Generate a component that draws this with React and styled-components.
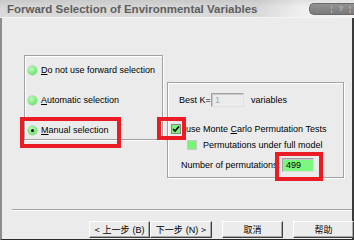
import React from 'react';
import styled, { createGlobalStyle } from 'styled-components';

const Global = createGlobalStyle`
  html, body { margin: 0; padding: 0; background: #ebebeb; }
  body { font-family: "Liberation Sans", Arial, sans-serif; }
  * { box-sizing: border-box; }
`;

const Window = styled.div`
  width: 354px;
  height: 240px;
  display: flex;
  flex-direction: column;
  overflow: hidden;
  background: #ebebeb;
`;

const TitleBar = styled.div`
  height: 18px;
  flex: none;
  display: flex;
  align-items: center;
  padding-left: 7px;
  background:
    linear-gradient(to bottom, rgba(0,0,0,0.06), rgba(0,0,0,0) 40%, rgba(255,255,255,0.1)),
    linear-gradient(to right, #d6d6d6 0, #d6d6d6 258px, #eeeeee 300px, #f2f2f2 100%);
  border-bottom: 1px solid #f4f4f4;
`;

const Title = styled.div`
  flex: 1;
  font-size: 11.5px;
  font-weight: bold;
  color: #5e5e5e;
  white-space: nowrap;
  padding-top: 1px;
`;

const HelpPill = styled.div`
  width: 45px;
  height: 12px;
  margin-top: 1px;
  border-radius: 5px 0 0 5px;
  background: linear-gradient(to bottom, #939393, #7a7a7a);
  border: 1px solid #6a6a6a;
  border-right: none;
  color: #d0d0d0;
  font-size: 8px;
  line-height: 10px;
  display: flex;
  justify-content: flex-end;
  gap: 6px;
  padding-right: 3px;
`;

const Body = styled.div`
  flex: 1;
  display: flex;
  flex-direction: column;
  border-left: 2px solid #8c8c8c;
  border-right: 2px solid #3a3a3a;
  border-bottom: 1px solid #2a2a2a;
  font-size: 9px;
  color: #000;
`;

const Main = styled.div`
  display: flex;
  align-items: flex-start;
  gap: 4px;
  padding-left: 22px;
`;

const GroupBox = styled.div`
  margin-top: ${p => p.$top}px;
  width: ${p => p.$w}px;
  height: ${p => p.$h}px;
  border: 1px solid #a2a2a2;
  box-shadow: inset 1px 1px 0 #fff, 1px 1px 0 #fff;
  display: flex;
  flex-direction: column;
`;

const RadioList = styled.div`
  display: flex;
  flex-direction: column;
  gap: 14px;
  padding: 6px 0 0 3px;
`;

const OptionRow = styled.div`
  position: relative;
  height: ${p => p.$h || 16}px;
  margin-top: ${p => p.$mt || 0}px;
  padding-left: ${p => p.$pl || 0}px;
  display: flex;
  align-items: center;
  gap: ${p => p.$gap ?? 4}px;
  white-space: nowrap;
`;

const Radio = styled.span`
  width: 9px;
  height: 9px;
  flex: none;
  border-radius: 50%;
  background: radial-gradient(circle at 40% 35%, #b8ffb8, #6fe36f 70%);
  box-shadow: 0 0 0 0.5px #8fd08f;
  display: flex;
  align-items: center;
  justify-content: center;
  &::after {
    content: '';
    width: 3px;
    height: 3px;
    border-radius: 50%;
    background: ${p => (p.$checked ? '#000' : 'transparent')};
  }
`;

const Key = styled.span`
  text-decoration: underline;
  text-underline-offset: 1px;
`;

const Highlight = styled.span`
  position: absolute;
  left: ${p => p.$x}px;
  top: ${p => p.$y}px;
  width: ${p => p.$w}px;
  height: ${p => p.$h}px;
  border: 4px solid #ec1c24;
  pointer-events: none;
`;

const Label = styled.span`
  display: inline-block;
  width: ${p => (p.$w ? `${p.$w}px` : 'auto')};
  margin-left: ${p => p.$ml || 0}px;
  color: #000;
`;

const TextField = styled.span`
  position: relative;
  width: ${p => p.$w}px;
  height: 14px;
  flex: none;
  display: flex;
  align-items: center;
  padding-left: 3px;
  border: 1px solid;
  border-color: #a0a0a0 #e0e0e0 #e0e0e0 #a0a0a0;
  box-shadow: inset 1px 1px 0 #c8c8c8;
  background: ${p => p.$bg || '#ebebeb'};
  color: ${p => p.$color || '#000'};
`;

const CheckBox = styled.span`
  position: relative;
  width: ${p => p.$size}px;
  height: ${p => p.$size}px;
  flex: none;
  background: #76f576;
  border: 1px solid ${p => p.$border};
  display: flex;
  align-items: center;
  justify-content: center;
`;

const Separator = styled.div`
  margin: 31px 0 0 10px;
  height: 2px;
  border-top: 1px solid #a6a6a6;
  border-bottom: 1px solid #fbfbfb;
`;

const ButtonRow = styled.div`
  display: flex;
  margin-top: 10px;
  padding-left: 87px;
  gap: 10px;
`;

const ButtonPair = styled.div`
  display: flex;
`;

const Button = styled.div`
  width: ${p => p.$w || 61}px;
  height: 17px;
  flex: none;
  display: flex;
  align-items: center;
  justify-content: center;
  background: #ececec;
  border: 1px solid;
  border-color: #ffffff #404040 #404040 #ffffff;
  box-shadow: inset -1px -1px 0 #a8a8a8;
  font-family: "Noto Sans CJK SC", "Liberation Sans", sans-serif;
  font-size: 9px;
  color: #000;
  white-space: nowrap;
  gap: 3px;
`;

const Mnemonic = styled.span`
  font-family: "Liberation Sans", sans-serif;
  font-size: 9px;
`;

export default function App() {
  return (
    <>
      <Global />
      <Window>
        <TitleBar>
          <Title>Forward Selection of Environmental Variables</Title>
          <HelpPill>
            <span>¦</span>
            <span>?</span>
            <span>¦</span>
          </HelpPill>
        </TitleBar>
        <Body>
          <Main>
            <GroupBox $top={37} $w={139} $h={85}>
              <RadioList>
                <OptionRow>
                  <Radio />
                  <span><Key>D</Key>o not use forward selection</span>
                </OptionRow>
                <OptionRow>
                  <Radio />
                  <span><Key>A</Key>utomatic selection</span>
                </OptionRow>
                <OptionRow>
                  <Radio $checked />
                  <span><Key>M</Key>anual selection</span>
                  <Highlight $x={-8} $y={-5} $w={101} $h={31} />
                </OptionRow>
              </RadioList>
            </GroupBox>
            <GroupBox $top={64} $w={177} $h={96}>
              <OptionRow $h={14} $mt={10} $pl={11} $gap={0}>
                <Label $w={32}>Best K=</Label>
                <TextField $w={33} $color="#a8a8a8">1</TextField>
                <Label $ml={7}>variables</Label>
              </OptionRow>
              <OptionRow $h={14} $mt={15} $pl={3} $gap={5}>
                <CheckBox $size={10} $border="#8a8a8a">
                  <svg width="8" height="8" viewBox="0 0 8 8">
                    <path d="M1 4 L3 6 L7 1.5" fill="none" stroke="#000" strokeWidth="1.6" />
                  </svg>
                  <Highlight $x={-15} $y={-8} $w={29} $h={23} />
                </CheckBox>
                <span>use Monte <Key>C</Key>arlo Permutation Tests</span>
              </OptionRow>
              <OptionRow $h={14} $mt={2} $pl={19} $gap={6}>
                <CheckBox $size={10} $border="#c8c8c8" />
                <span>Permutations under full model</span>
              </OptionRow>
              <OptionRow $h={14} $mt={6} $pl={13} $gap={0}>
                <Label $w={101}>Number of permutations:</Label>
                <TextField $w={32} $bg="#7df77d">
                  499
                  <Highlight $x={-8} $y={-7} $w={48} $h={29} />
                </TextField>
              </OptionRow>
            </GroupBox>
          </Main>
          <Separator />
          <ButtonRow>
            <ButtonPair>
              <Button $w={61}><span>&lt;</span><span>上一步</span><Mnemonic>(B)</Mnemonic></Button>
              <Button $w={62}><span>下一步</span><Mnemonic>(N)</Mnemonic><span>&gt;</span></Button>
            </ButtonPair>
            <Button>取消</Button>
            <Button>帮助</Button>
          </ButtonRow>
        </Body>
      </Window>
    </>
  );
}
